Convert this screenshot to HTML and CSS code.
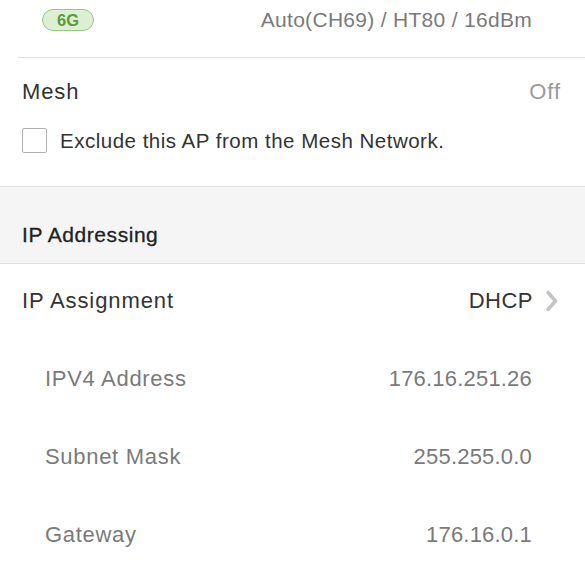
FILE: index.html
```html
<!DOCTYPE html>
<html>
<head>
<meta charset="utf-8">
<link rel="stylesheet" href="styles.css">
</head>
<body>
<div class="radio-row">
  <span class="badge">6G</span>
  <span class="radio-value">Auto(CH69) / HT80 / 16dBm</span>
</div>
<div class="divider"></div>
<section class="mesh">
  <div class="mesh-row">
    <span class="label">Mesh</span>
    <span class="off">Off</span>
  </div>
  <label class="check-row">
    <span class="checkbox"></span>
    <span class="check-text">Exclude this AP from the Mesh Network.</span>
  </label>
</section>
<div class="group-header">IP Addressing</div>
<div class="assign-row">
  <span class="label">IP Assignment</span>
  <span class="assign-value">DHCP
    <svg class="chevron" width="14" height="24" viewBox="0 0 14 24"><path d="M3 3.5 L10.5 12 L3 20.5" fill="none" stroke="#c4c4c4" stroke-width="3.6" stroke-linecap="round" stroke-linejoin="round"/></svg>
  </span>
</div>
<div class="sub-row"><span class="sub-label">IPV4 Address</span><span class="sub-value">176.16.251.26</span></div>
<div class="sub-row"><span class="sub-label">Subnet Mask</span><span class="sub-value">255.255.0.0</span></div>
<div class="sub-row"><span class="sub-label">Gateway</span><span class="sub-value">176.16.0.1</span></div>
</body>
</html>
```
FILE: styles.css
```css
html, body {
  margin: 0;
  padding: 0;
  background: #ffffff;
}
body {
  font-family: "Liberation Sans", Arial, sans-serif;
  color: #333333;
  width: 585px;
  overflow: hidden;
}
.radio-row {
  height: 40px;
  display: flex;
  align-items: center;
  justify-content: space-between;
  padding: 0 53px 0 42px;
}
.badge {
  display: inline-flex;
  align-items: center;
  justify-content: center;
  width: 52px;
  height: 22px;
  box-sizing: border-box;
  border: 1px solid #98c981;
  background: #ddefd2;
  border-radius: 11px;
  color: #5a9a3c;
  font-size: 16.5px;
  font-weight: bold;
}
.radio-value {
  font-size: 21px;
  color: #7a7a7a;
  letter-spacing: 0.3px;
}
.divider {
  height: 1px;
  background: #e2e2e2;
  margin: 17px 0 0 18px;
}
.mesh {
  padding: 20px 24px 32px 22px;
}
.mesh-row {
  height: 28px;
  display: flex;
  align-items: center;
  justify-content: space-between;
}
.label {
  font-size: 22px;
  letter-spacing: 0.9px;
  color: #333;
}
.off {
  font-size: 22px;
  color: #9a9a9a;
  letter-spacing: 0.9px;
}
.check-row {
  margin-top: 21px;
  height: 27px;
  display: flex;
  align-items: center;
  gap: 13px;
}
.checkbox {
  width: 25px;
  height: 25px;
  border: 1.5px solid #b0b0b0;
  border-radius: 2px;
  box-sizing: border-box;
}
.check-text {
  font-size: 20.5px;
  letter-spacing: 0.5px;
  color: #333;
}
.group-header {
  border-top: 1px solid #dedede;
  border-bottom: 1px solid #dedede;
  background: #f5f5f5;
  display: flex;
  align-items: flex-end;
  padding: 0 22px 16px;
  height: 60px;
  font-size: 21px;
  letter-spacing: 0.55px;
  color: #222;
  -webkit-text-stroke: 0.3px #222;
}
.assign-row {
  height: 76px;
  box-sizing: border-box;
  padding: 0 26px 2px 22px;
  display: flex;
  align-items: center;
  justify-content: space-between;
}
.assign-value {
  display: flex;
  align-items: center;
  gap: 12px;
  font-size: 22px;
  letter-spacing: 0.5px;
  color: #333;
}
.sub-row {
  height: 78px;
  display: flex;
  align-items: center;
  justify-content: space-between;
  padding: 0 53px 0 45px;
  font-size: 22px;
  color: #7a7a7a;
}
.sub-label {
  letter-spacing: 0.7px;
}
.sub-value {
  letter-spacing: 0.2px;
}
```
